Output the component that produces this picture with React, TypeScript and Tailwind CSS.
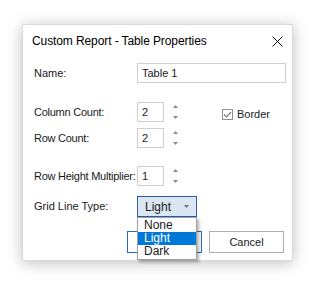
import React from "react"

function Spinner() {
  return (
    <div className="ml-[9px] flex h-5 flex-col items-center justify-between py-[3px]">
      <svg width="5" height="3" viewBox="0 0 5 3">
        <path d="M2.5 0 L5 3 L0 3 Z" fill="#8a8a8a" />
      </svg>
      <svg width="5" height="3" viewBox="0 0 5 3">
        <path d="M0 0 L5 0 L2.5 3 Z" fill="#8a8a8a" />
      </svg>
    </div>
  )
}

function NumberRow({ label, value, className }: { label: string; value: string; className?: string }) {
  return (
    <div className={"flex items-center " + (className ?? "")}>
      <span className="w-[103px] shrink-0 whitespace-nowrap tracking-[-0.25px]">{label}</span>
      <div className="flex h-5 w-[27px] items-center border border-[#cfcfcf] pl-[4px]">{value}</div>
      <Spinner />
    </div>
  )
}

export default function App() {
  return (
    <div
      className="h-[287px] w-[317px] bg-white pl-[22px] pt-[24px] text-[11px] text-[#1a1a1a]"
      style={{ fontFamily: '"Liberation Sans", Arial, sans-serif' }}
    >
      <div className="relative h-[237px] w-[271px] border border-[#d9d9d9] bg-white shadow-[0_2px_14px_rgba(0,0,0,0.25)]">
        <div className="flex h-[32px] items-center justify-between pl-[9px] pr-[9px]">
          <span className="text-[12px] tracking-[-0.1px] text-black">Custom Report - Table Properties</span>
          <svg width="11" height="11" viewBox="0 0 11 11">
            <path d="M0.5 0.5 L10.5 10.5 M10.5 0.5 L0.5 10.5" stroke="#111" strokeWidth="1" />
          </svg>
        </div>

        <div className="pl-[11px]">
          <div className="mt-[6px] flex items-center">
            <span className="w-[103px] shrink-0">Name:</span>
            <div className="flex h-5 w-[149px] items-center border border-[#cfcfcf] pl-[4px]">Table 1</div>
          </div>

          <div className="relative">
            <NumberRow label="Column Count:" value="2" className="mt-[19px]" />
            <label className="absolute left-[188px] top-[4px] flex items-center gap-[4px]">
              <span className="flex h-[11px] w-[11px] items-center justify-center border border-[#8f8f8f] bg-white">
                <svg width="9" height="7" viewBox="0 0 9 7">
                  <path d="M1 3.5 L3.5 6 L8 1" stroke="#7a7a7a" strokeWidth="1.2" fill="none" />
                </svg>
              </span>
              <span>Border</span>
            </label>
          </div>
          <NumberRow label="Row Count:" value="2" className="mt-[6px]" />
          <NumberRow label="Row Height Multiplier:" value="1" className="mt-[18px]" />

          <div className="mt-[10px] flex items-center">
            <span className="w-[103px] shrink-0">Grid Line Type:</span>
            <div className="relative">
              <div className="flex h-[21px] w-[60px] items-center justify-between border border-[#2a5caa] bg-[#dbe6f3] pl-[7px] pr-[7px] text-[12px]">
                <span>Light</span>
                <svg width="5" height="3" viewBox="0 0 5 3">
                  <path d="M0 0 L5 0 L2.5 3 Z" fill="#6d6d6d" />
                </svg>
              </div>
              <ul className="absolute left-0 top-[21px] z-10 w-[60px] border border-[#a0a0a0] bg-white py-px text-[12px] leading-[13px] shadow-[2px_2px_3px_rgba(0,0,0,0.3)]">
                <li className="pl-[6px]">None</li>
                <li className="bg-[#0078d7] pl-[6px] text-white">Light</li>
                <li className="pl-[6px]">Dark</li>
              </ul>
            </div>
          </div>
        </div>

        <div className="mt-[14px] flex justify-end gap-[7px] pr-[8px]">
          <button className="h-[22px] w-[75px] border border-[#2a6ac4] bg-white text-[11px]">OK</button>
          <button className="h-[22px] w-[75px] border border-[#adadad] bg-white text-[11px]">Cancel</button>
        </div>
      </div>
    </div>
  )
}
